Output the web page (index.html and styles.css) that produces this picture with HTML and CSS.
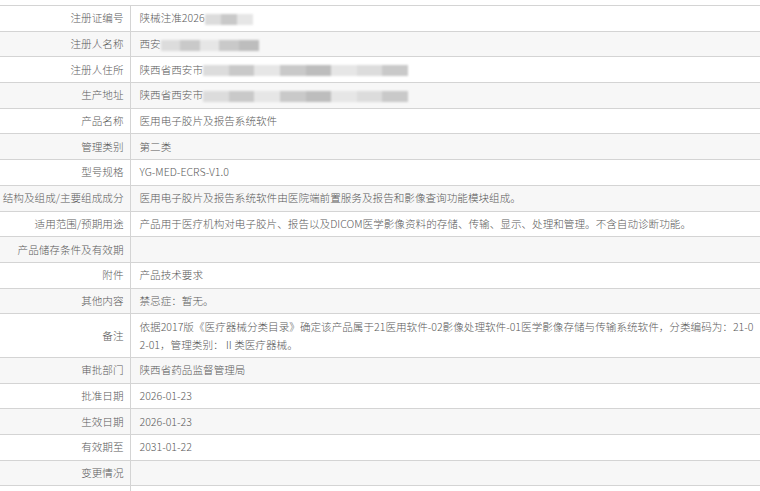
FILE: index.html
```html
<!DOCTYPE html>
<html lang="zh-CN">
<head>
    <meta charset="UTF-8">
    <meta name="viewport" content="width=device-width, initial-scale=1.0">
    <title>注册证详情</title>
    <link rel="stylesheet" href="styles.css">
</head>
<body>

    <div class="detail-wrap">
        <table class="detail-table">
            <tr>
                <th>注册证编号</th>
                <td>陕械注准2026<span class="masked masked-sm"><i></i><i></i><i></i></span></td>
            </tr>
            <tr>
                <th>注册人名称</th>
                <td>西安<span class="masked masked-md"><i></i><i></i><i></i><i></i><i></i></span></td>
            </tr>
            <tr>
                <th>注册人住所</th>
                <td>陕西省西安市<span class="masked masked-lg"><i></i><i></i><i></i><i></i><i></i><i></i><i></i><i></i></span></td>
            </tr>
            <tr>
                <th>生产地址</th>
                <td>陕西省西安市<span class="masked masked-lg"><i></i><i></i><i></i><i></i><i></i><i></i><i></i><i></i></span></td>
            </tr>
            <tr>
                <th>产品名称</th>
                <td>医用电子胶片及报告系统软件</td>
            </tr>
            <tr>
                <th>管理类别</th>
                <td>第二类</td>
            </tr>
            <tr>
                <th>型号规格</th>
                <td>YG-MED-ECRS-V1.0</td>
            </tr>
            <tr>
                <th>结构及组成/主要组成成分</th>
                <td>医用电子胶片及报告系统软件由医院端前置服务及报告和影像查询功能模块组成。</td>
            </tr>
            <tr>
                <th>适用范围/预期用途</th>
                <td>产品用于医疗机构对电子胶片、报告以及DICOM医学影像资料的存储、传输、显示、处理和管理。不含自动诊断功能。</td>
            </tr>
            <tr>
                <th>产品储存条件及有效期</th>
                <td></td>
            </tr>
            <tr>
                <th>附件</th>
                <td>产品技术要求</td>
            </tr>
            <tr>
                <th>其他内容</th>
                <td>禁忌症：暂无。</td>
            </tr>
            <tr>
                <th>备注</th>
                <td>依据2017版《医疗器械分类目录》确定该产品属于21医用软件-02影像处理软件-01医学影像存储与传输系统软件，分类编码为：21-02-01，管理类别：Ⅱ类医疗器械。</td>
            </tr>
            <tr>
                <th>审批部门</th>
                <td>陕西省药品监督管理局</td>
            </tr>
            <tr>
                <th>批准日期</th>
                <td>2026-01-23</td>
            </tr>
            <tr>
                <th>生效日期</th>
                <td>2026-01-23</td>
            </tr>
            <tr>
                <th>有效期至</th>
                <td>2031-01-22</td>
            </tr>
            <tr>
                <th>变更情况</th>
                <td></td>
            </tr>
            <tr>
                <th></th>
                <td></td>
            </tr>
        </table>
    </div>

</body>
</html>
```

FILE: styles.css
```css
:root {
    --line-color: #d4d4d4;
    --stripe-color: #f7f7f7;
    --txt-color: #5a5a5a;
}

body {
    margin: 0;
    padding: 0;
    background-color: #fff;
    font-family: 'Noto Sans CJK SC', 'Noto Sans', sans-serif;
    font-size: 10.6px;
    font-weight: 300;
    color: var(--txt-color);
    overflow: hidden;
}

.detail-wrap {
    padding-top: 5px;
    width: 760px;
}

.detail-table {
    width: 100%;
    border-collapse: collapse;
    table-layout: fixed;
}

.detail-table th,
.detail-table td {
    border-top: 1px solid var(--line-color);
    border-bottom: 1px solid var(--line-color);
    padding: 3.35px 1.5px 3.35px 9px;
    line-height: 18px;
    vertical-align: middle;
}

.detail-table th {
    width: 130px;
    box-sizing: border-box;
    padding: 3.35px 6px 3.35px 0;
    text-align: right;
    font-weight: 300;
    white-space: nowrap;
    border-right: 1px solid var(--line-color);
}

.detail-table td {
    text-align: left;
    word-break: break-all;
    line-break: anywhere;
}

.detail-table tr:nth-child(even) th,
.detail-table tr:nth-child(even) td {
    background-color: var(--stripe-color);
}

/* blurred (hidden) personal info */
.masked {
    display: inline-flex;
    vertical-align: middle;
    height: 11px;
    filter: blur(1.2px);
}

.masked i {
    display: block;
    height: 100%;
    flex: 1;
    background-color: #dcdcdc;
}

.masked i:nth-child(2n) {
    background-color: #c9c9c9;
}

.masked i:nth-child(3n) {
    background-color: #e6e6e6;
}

.masked i:nth-child(5n) {
    background-color: #bdbdbd;
}

.masked-sm {
    width: 48px;
}

.masked-md {
    width: 98px;
}

.masked-lg {
    width: 205px;
}
```
